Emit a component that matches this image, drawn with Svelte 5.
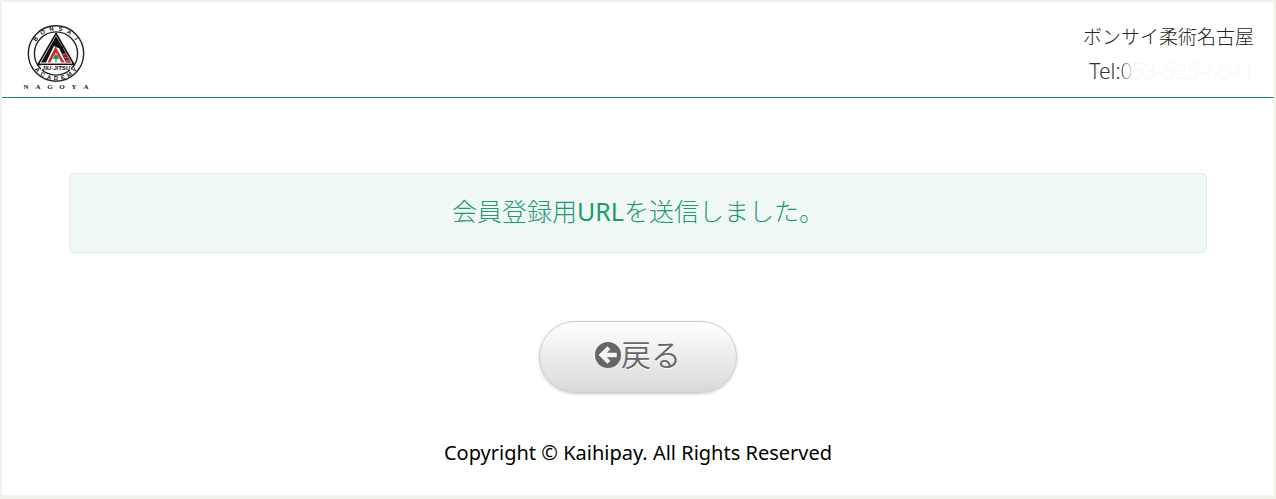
<script lang="ts">
  const club = {
    name: 'ボンサイ柔術名古屋',
    tel: '053-525-6641',
  }
</script>

<svelte:head>
  <title>Kaihipay</title>
</svelte:head>

<div class="page">
  <header class="page-header">
    <svg class="logo" viewBox="0 0 68 66" role="img" aria-label="Bonsai Jiu-Jitsu Academy Nagoya">
      <defs>
        <path id="arc-top" d="M 10.9 28.5 A 23.1 23.1 0 0 1 57.1 28.5" />
        <path id="arc-bottom" d="M 7.2 28.5 A 26.8 26.8 0 0 0 60.8 28.5" />
      </defs>
      <circle cx="34" cy="28.5" r="27.7" fill="#fff" stroke="#222" stroke-width="1.4" />
      <circle cx="34" cy="28.5" r="21.6" fill="#fff" stroke="#222" stroke-width="1.4" />
      <g class="ring" text-anchor="middle">
        {#each 'BONSAI' as letter, i}
          <text><textPath href="#arc-top" startOffset="{20 + i * 12}%">{letter}</textPath></text>
        {/each}
        {#each 'ACADEMY' as letter, i}
          <text><textPath href="#arc-bottom" startOffset="{23 + i * 9}%">{letter}</textPath></text>
        {/each}
      </g>
      <path d="M34 8.5 L52 39.5 H16 Z" fill="#fff" stroke="#111" stroke-width="1.6" />
      <path d="M34 11 L41 23 L36 23 L32 21 L24 37.5 H19 Z" fill="#111" />
      <path d="M36 21 H40 L49 37.5 H44 Z" fill="#111" />
      <path d="M33.5 21.5 L41 35 L43 37.5 H39.5 L34 27.5 L30 34 L28.5 37.5 H25.5 Z" fill="#d22630" />
      <path d="M40 28.5 h4 l1 2 h-4z M41.5 31.5 h5 l1 2 h-5z M43 34.5 h5 l1.5 2.5 h-5z" fill="#d9474f" />
      <path d="M34 29 l2.6 2.4 -1 .4 2 2 -3 .2 v3.2 h-1.2 v-3.2 l-3-.2 2-2 -1-.4z" fill="#179a55" />
      <rect x="19" y="39.5" width="30" height="5.5" fill="#fff" />
      <path d="M16 39.3 H52" stroke="#111" stroke-width="1.2" />
      <text class="band" x="34" y="44.6" text-anchor="middle">JIU-JITSU</text>
      <g class="city" text-anchor="middle">
        {#each 'NAGOYA' as letter, i}
          <text x={4 + i * 12} y="63.5">{letter}</text>
        {/each}
      </g>
    </svg>
    <address class="club">
      <span>{club.name}</span>
      <span class="phone">Tel:<span class="tel">{club.tel}</span></span>
    </address>
  </header>

  <main class="content">
    <p class="notice" role="status">会員登録用<span class="latin">URL</span>を送信しました。</p>
    <button type="button" class="back">
      <svg class="back-icon" viewBox="0 0 26 26" aria-hidden="true">
        <circle cx="13" cy="13" r="13" fill="#666" />
        <path d="M3.6 13 L12.4 4.2 L15.4 7.2 L11.8 10.8 H21.8 V15.2 H11.8 L15.4 18.8 L12.4 21.8 Z" fill="#f4f4f4" />
      </svg>戻る
    </button>
  </main>

  <footer class="page-footer">Copyright © Kaihipay. All Rights Reserved</footer>
</div>

<style>
  :global(body) {
    background: #f2f2e8;
  }

  .page {
    margin: 0 2px 4px;
    border-top: 2px solid #f0f0f0;
    background: #fff;
    color: #222;
    font-family: "Noto Sans", "Noto Sans CJK JP", sans-serif;
    font-size: 19px;
    font-weight: 300;
  }

  .page-header {
    display: flex;
    align-items: flex-start;
    justify-content: space-between;
    padding: 18px 20px 6px;
    border-bottom: 1px solid #0e9068;
  }
  .logo {
    width: 68px;
    height: 66px;
    margin-top: 5px;
  }
  .ring {
    fill: #111;
    font: bold 6px "Liberation Sans", sans-serif;
  }
  .band {
    fill: #111;
    font: italic bold 6px "Liberation Sans", sans-serif;
  }
  .city {
    fill: #222;
    font: bold 7px "Liberation Serif", serif;
  }

  .club {
    display: flex;
    flex-direction: column;
    align-items: flex-end;
    font-style: normal;
    line-height: 34px;
  }
  .phone {
    color: #333;
    font-size: 21px;
    font-weight: 350;
  }
  .tel {
    background: linear-gradient(to right, #444, #bbb 8px, #f5f5f5 14px, #f9f9f9);
    background-clip: text;
    color: transparent;
  }

  .content {
    display: flex;
    flex-direction: column;
    align-items: center;
    gap: 68px;
    padding: 75px 67px 0;
  }
  .notice {
    box-sizing: border-box;
    width: 100%;
    margin: 0;
    padding: 17px 20px 21px;
    border: 1px solid #dcefe9;
    border-radius: 5px;
    background: #f0f8f5;
    color: #1d9a70;
    font-size: 25px;
    line-height: 40px;
    text-align: center;
  }
  .latin {
    font-weight: 400;
  }
  .back {
    display: flex;
    align-items: center;
    padding: 13px 55px 17px;
    border: 1px solid #ccc;
    border-radius: 36px;
    background: linear-gradient(#fff, #d9d9d9);
    box-shadow: 0 1px 3px rgba(0, 0, 0, 0.2);
    color: #666;
    font-family: inherit;
    font-size: 30px;
    font-weight: 350;
    line-height: 40px;
    text-shadow: 0 1px 1px #fff;
    cursor: pointer;
  }
  .back-icon {
    width: 26px;
    height: 26px;
  }

  .page-footer {
    padding: 46px 20px 28px;
    color: #000;
    font-size: 20px;
    font-weight: 400;
    line-height: 28px;
    text-align: center;
  }
</style>
